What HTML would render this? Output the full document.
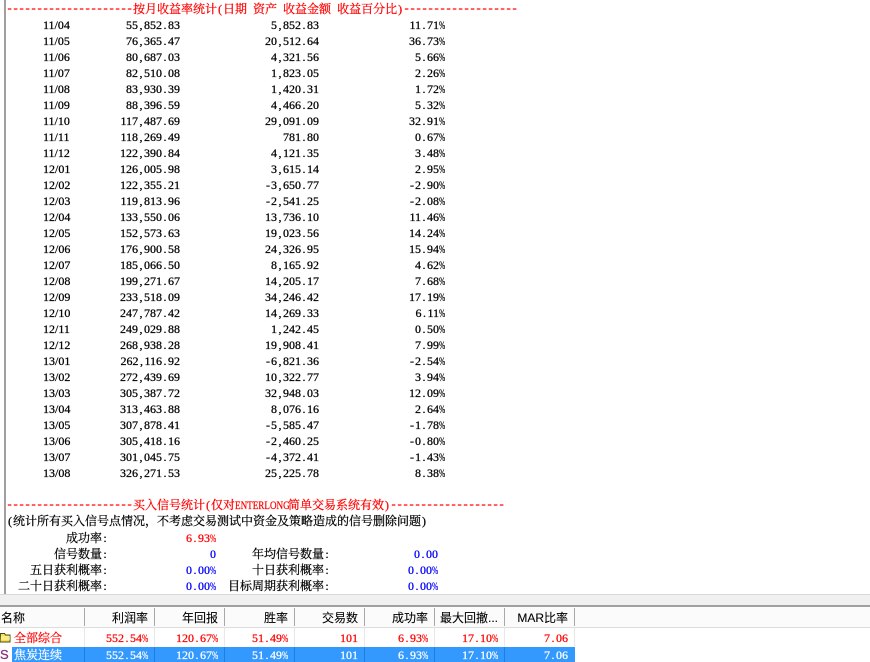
<!DOCTYPE html>
<html><head><meta charset="utf-8"><style>
html,body{margin:0;padding:0;background:#fff}
#p{position:relative;width:870px;height:662px;overflow:hidden;background:#fff;font:12px/16px "Liberation Serif","Noto Serif CJK SC",serif;color:#000;-webkit-text-stroke:.25px currentColor}
.r{position:absolute;left:0;width:600px;height:16px;white-space:nowrap}
.r span{position:absolute;top:0;white-space:nowrap}
.a{left:43px}.b{right:420px}.c{right:281px}.d{right:155px}
i{display:inline-block;width:6px;font-style:normal;text-align:center}
b{display:inline-block;width:6px;font-weight:normal;transform:scaleX(.62);transform-origin:left}
.d1{font:12px/16px "Liberation Mono",monospace;letter-spacing:-1.2px;color:#f00}
.red{color:#f00}.blue{color:#00f}
.lb{right:492px}.v1{right:384px}.lb2{right:270px}.v2{right:162px}
.h{position:absolute;top:607px;left:0;width:575px;height:20px;font:12px/22px "Liberation Sans","Noto Sans CJK SC",sans-serif;-webkit-text-stroke:.1px currentColor}
.hb{position:absolute;top:607px;left:0;width:870px;height:20px;background:#fbfbfb}
.h span,.t span{position:absolute;top:0;white-space:nowrap}
.s{position:absolute;top:608px;width:1px;height:18px;background:#a8a8a8}
.t{position:absolute;left:0;height:17px;line-height:17px;width:575px}
.g{position:absolute;top:628px;width:1px;height:18px;background:#e8e8e8}
.k1{right:427px}.k2{right:357px}.k3{right:287px}.k4{right:217px}.k5{right:147px}.k6{right:77px}.k7{right:7px}
</style></head><body><div id="p">
<div style="position:absolute;left:4px;top:0;width:2px;height:594px;background:#a0a0a0"></div>

<div class="r" style="top:1px"><span class="d1" style="left:6px">---------------------</span><span class="red" style="left:133px">按月收益率统计<i>(</i>日期<i>&nbsp;</i>资产<i>&nbsp;</i>收益金额<i>&nbsp;</i>收益百分比<i>)</i></span><span class="d1" style="left:403px">-------------------</span></div>

<div class="r" style="top:17px"><span class="a">11/04</span><span class="b">55<i>,</i>852<i>.</i>83</span><span class="c">5<i>,</i>852<i>.</i>83</span><span class="d">11<i>.</i>71<b>%</b></span></div>
<div class="r" style="top:33px"><span class="a">11/05</span><span class="b">76<i>,</i>365<i>.</i>47</span><span class="c">20<i>,</i>512<i>.</i>64</span><span class="d">36<i>.</i>73<b>%</b></span></div>
<div class="r" style="top:49px"><span class="a">11/06</span><span class="b">80<i>,</i>687<i>.</i>03</span><span class="c">4<i>,</i>321<i>.</i>56</span><span class="d">5<i>.</i>66<b>%</b></span></div>
<div class="r" style="top:65px"><span class="a">11/07</span><span class="b">82<i>,</i>510<i>.</i>08</span><span class="c">1<i>,</i>823<i>.</i>05</span><span class="d">2<i>.</i>26<b>%</b></span></div>
<div class="r" style="top:81px"><span class="a">11/08</span><span class="b">83<i>,</i>930<i>.</i>39</span><span class="c">1<i>,</i>420<i>.</i>31</span><span class="d">1<i>.</i>72<b>%</b></span></div>
<div class="r" style="top:97px"><span class="a">11/09</span><span class="b">88<i>,</i>396<i>.</i>59</span><span class="c">4<i>,</i>466<i>.</i>20</span><span class="d">5<i>.</i>32<b>%</b></span></div>
<div class="r" style="top:113px"><span class="a">11/10</span><span class="b">117<i>,</i>487<i>.</i>69</span><span class="c">29<i>,</i>091<i>.</i>09</span><span class="d">32<i>.</i>91<b>%</b></span></div>
<div class="r" style="top:129px"><span class="a">11/11</span><span class="b">118<i>,</i>269<i>.</i>49</span><span class="c">781<i>.</i>80</span><span class="d">0<i>.</i>67<b>%</b></span></div>
<div class="r" style="top:145px"><span class="a">11/12</span><span class="b">122<i>,</i>390<i>.</i>84</span><span class="c">4<i>,</i>121<i>.</i>35</span><span class="d">3<i>.</i>48<b>%</b></span></div>
<div class="r" style="top:161px"><span class="a">12/01</span><span class="b">126<i>,</i>005<i>.</i>98</span><span class="c">3<i>,</i>615<i>.</i>14</span><span class="d">2<i>.</i>95<b>%</b></span></div>
<div class="r" style="top:177px"><span class="a">12/02</span><span class="b">122<i>,</i>355<i>.</i>21</span><span class="c"><i>-</i>3<i>,</i>650<i>.</i>77</span><span class="d"><i>-</i>2<i>.</i>90<b>%</b></span></div>
<div class="r" style="top:193px"><span class="a">12/03</span><span class="b">119<i>,</i>813<i>.</i>96</span><span class="c"><i>-</i>2<i>,</i>541<i>.</i>25</span><span class="d"><i>-</i>2<i>.</i>08<b>%</b></span></div>
<div class="r" style="top:209px"><span class="a">12/04</span><span class="b">133<i>,</i>550<i>.</i>06</span><span class="c">13<i>,</i>736<i>.</i>10</span><span class="d">11<i>.</i>46<b>%</b></span></div>
<div class="r" style="top:225px"><span class="a">12/05</span><span class="b">152<i>,</i>573<i>.</i>63</span><span class="c">19<i>,</i>023<i>.</i>56</span><span class="d">14<i>.</i>24<b>%</b></span></div>
<div class="r" style="top:241px"><span class="a">12/06</span><span class="b">176<i>,</i>900<i>.</i>58</span><span class="c">24<i>,</i>326<i>.</i>95</span><span class="d">15<i>.</i>94<b>%</b></span></div>
<div class="r" style="top:257px"><span class="a">12/07</span><span class="b">185<i>,</i>066<i>.</i>50</span><span class="c">8<i>,</i>165<i>.</i>92</span><span class="d">4<i>.</i>62<b>%</b></span></div>
<div class="r" style="top:273px"><span class="a">12/08</span><span class="b">199<i>,</i>271<i>.</i>67</span><span class="c">14<i>,</i>205<i>.</i>17</span><span class="d">7<i>.</i>68<b>%</b></span></div>
<div class="r" style="top:289px"><span class="a">12/09</span><span class="b">233<i>,</i>518<i>.</i>09</span><span class="c">34<i>,</i>246<i>.</i>42</span><span class="d">17<i>.</i>19<b>%</b></span></div>
<div class="r" style="top:305px"><span class="a">12/10</span><span class="b">247<i>,</i>787<i>.</i>42</span><span class="c">14<i>,</i>269<i>.</i>33</span><span class="d">6<i>.</i>11<b>%</b></span></div>
<div class="r" style="top:321px"><span class="a">12/11</span><span class="b">249<i>,</i>029<i>.</i>88</span><span class="c">1<i>,</i>242<i>.</i>45</span><span class="d">0<i>.</i>50<b>%</b></span></div>
<div class="r" style="top:337px"><span class="a">12/12</span><span class="b">268<i>,</i>938<i>.</i>28</span><span class="c">19<i>,</i>908<i>.</i>41</span><span class="d">7<i>.</i>99<b>%</b></span></div>
<div class="r" style="top:353px"><span class="a">13/01</span><span class="b">262<i>,</i>116<i>.</i>92</span><span class="c"><i>-</i>6<i>,</i>821<i>.</i>36</span><span class="d"><i>-</i>2<i>.</i>54<b>%</b></span></div>
<div class="r" style="top:369px"><span class="a">13/02</span><span class="b">272<i>,</i>439<i>.</i>69</span><span class="c">10<i>,</i>322<i>.</i>77</span><span class="d">3<i>.</i>94<b>%</b></span></div>
<div class="r" style="top:385px"><span class="a">13/03</span><span class="b">305<i>,</i>387<i>.</i>72</span><span class="c">32<i>,</i>948<i>.</i>03</span><span class="d">12<i>.</i>09<b>%</b></span></div>
<div class="r" style="top:401px"><span class="a">13/04</span><span class="b">313<i>,</i>463<i>.</i>88</span><span class="c">8<i>,</i>076<i>.</i>16</span><span class="d">2<i>.</i>64<b>%</b></span></div>
<div class="r" style="top:417px"><span class="a">13/05</span><span class="b">307<i>,</i>878<i>.</i>41</span><span class="c"><i>-</i>5<i>,</i>585<i>.</i>47</span><span class="d"><i>-</i>1<i>.</i>78<b>%</b></span></div>
<div class="r" style="top:433px"><span class="a">13/06</span><span class="b">305<i>,</i>418<i>.</i>16</span><span class="c"><i>-</i>2<i>,</i>460<i>.</i>25</span><span class="d"><i>-</i>0<i>.</i>80<b>%</b></span></div>
<div class="r" style="top:449px"><span class="a">13/07</span><span class="b">301<i>,</i>045<i>.</i>75</span><span class="c"><i>-</i>4<i>,</i>372<i>.</i>41</span><span class="d"><i>-</i>1<i>.</i>43<b>%</b></span></div>
<div class="r" style="top:465px"><span class="a">13/08</span><span class="b">326<i>,</i>271<i>.</i>53</span><span class="c">25<i>,</i>225<i>.</i>78</span><span class="d">8<i>.</i>38<b>%</b></span></div>

<div class="r" style="top:497px"><span class="d1" style="left:6px">---------------------</span><span class="red" style="left:133px">买入信号统计<i>(</i>仅对<em style="display:inline-block;width:53px;font-style:normal;transform:scaleX(.76);transform-origin:left">ENTERLONG</em>简单交易系统有效<i>)</i></span><span class="d1" style="left:390px">-------------------</span></div>
<div class="r" style="top:513px"><span style="left:7px"><i>(</i>统计所有买入信号点情况，不考虑交易测试中资金及策略造成的信号删除问题<i>)</i></span></div>
<div class="r" style="top:530px"><span class="lb">成功率<i>:</i></span><span class="v1 red">6<i>.</i>93<b>%</b></span></div>
<div class="r" style="top:546px"><span class="lb">信号数量<i>:</i></span><span class="v1 blue">0</span><span class="lb2">年均信号数量<i>:</i></span><span class="v2 blue">0<i>.</i>00</span></div>
<div class="r" style="top:562px"><span class="lb">五日获利概率<i>:</i></span><span class="v1 blue">0<i>.</i>00<b>%</b></span><span class="lb2">十日获利概率<i>:</i></span><span class="v2 blue">0<i>.</i>00<b>%</b></span></div>
<div class="r" style="top:578px"><span class="lb">二十日获利概率<i>:</i></span><span class="v1 blue">0<i>.</i>00<b>%</b></span><span class="lb2">目标周期获利概率<i>:</i></span><span class="v2 blue">0<i>.</i>00<b>%</b></span></div>

<div style="position:absolute;left:0;top:594px;width:870px;height:1px;background:#d8d8d8"></div>
<div style="position:absolute;left:0;top:595px;width:870px;height:10px;background:#f0f0f0"></div>
<div style="position:absolute;left:0;top:605px;width:870px;height:2px;background:#a0a0a0"></div>
<div class="hb"></div>
<div class="h">
<span style="left:1px">名称</span><span class="k1">利润率</span><span class="k2">年回报</span><span class="k3">胜率</span><span class="k4">交易数</span><span class="k5">成功率</span><span class="k6">最大回撤...</span><span class="k7">MAR比率</span>
</div>
<div style="position:absolute;left:0;top:627px;width:870px;height:1px;background:#dcdcdc"></div>
<div class="s" style="left:84px"></div><div class="s" style="left:154px"></div><div class="s" style="left:224px"></div><div class="s" style="left:294px"></div><div class="s" style="left:364px"></div><div class="s" style="left:434px"></div><div class="s" style="left:504px"></div><div class="s" style="left:574px"></div>
<div class="g" style="left:84px"></div><div class="g" style="left:154px"></div><div class="g" style="left:224px"></div><div class="g" style="left:294px"></div><div class="g" style="left:364px"></div><div class="g" style="left:434px"></div><div class="g" style="left:504px"></div><div class="g" style="left:574px"></div>

<svg style="position:absolute;left:0;top:632px" width="11" height="11" viewBox="0 0 11 11"><path d="M0.500 1.500h4l1 1.500h4.500v7h-10z" fill="#f5df4d" stroke="#4a4a20"/><path d="M1 5h9M1 7h9" stroke="#fff8c0"/></svg>
<div class="t red" style="top:630px"><span style="left:14px">全部综合</span><span class="k1">552<i>.</i>54<b>%</b></span><span class="k2">120<i>.</i>67<b>%</b></span><span class="k3">51<i>.</i>49<b>%</b></span><span class="k4">101</span><span class="k5">6<i>.</i>93<b>%</b></span><span class="k6">17<i>.</i>10<b>%</b></span><span class="k7">7<i>.</i>06</span></div>

<div style="position:absolute;left:12px;top:647px;width:563px;height:15px;background:#3399ff"></div>
<div class="g" style="left:84px;top:647px;height:15px;background:#1f7fe0"></div><div class="g" style="left:154px;top:647px;height:15px;background:#1f7fe0"></div><div class="g" style="left:224px;top:647px;height:15px;background:#1f7fe0"></div><div class="g" style="left:294px;top:647px;height:15px;background:#1f7fe0"></div><div class="g" style="left:364px;top:647px;height:15px;background:#1f7fe0"></div><div class="g" style="left:434px;top:647px;height:15px;background:#1f7fe0"></div><div class="g" style="left:504px;top:647px;height:15px;background:#1f7fe0"></div>
<div style="position:absolute;left:0;top:647px;font:13px/16px 'Liberation Sans',sans-serif;color:#8b2f7e">S</div>
<div class="t" style="top:647px;color:#fff"><span style="left:14px">焦炭连续</span><span class="k1">552<i>.</i>54<b>%</b></span><span class="k2">120<i>.</i>67<b>%</b></span><span class="k3">51<i>.</i>49<b>%</b></span><span class="k4">101</span><span class="k5">6<i>.</i>93<b>%</b></span><span class="k6">17<i>.</i>10<b>%</b></span><span class="k7">7<i>.</i>06</span></div>
</div></body></html>
